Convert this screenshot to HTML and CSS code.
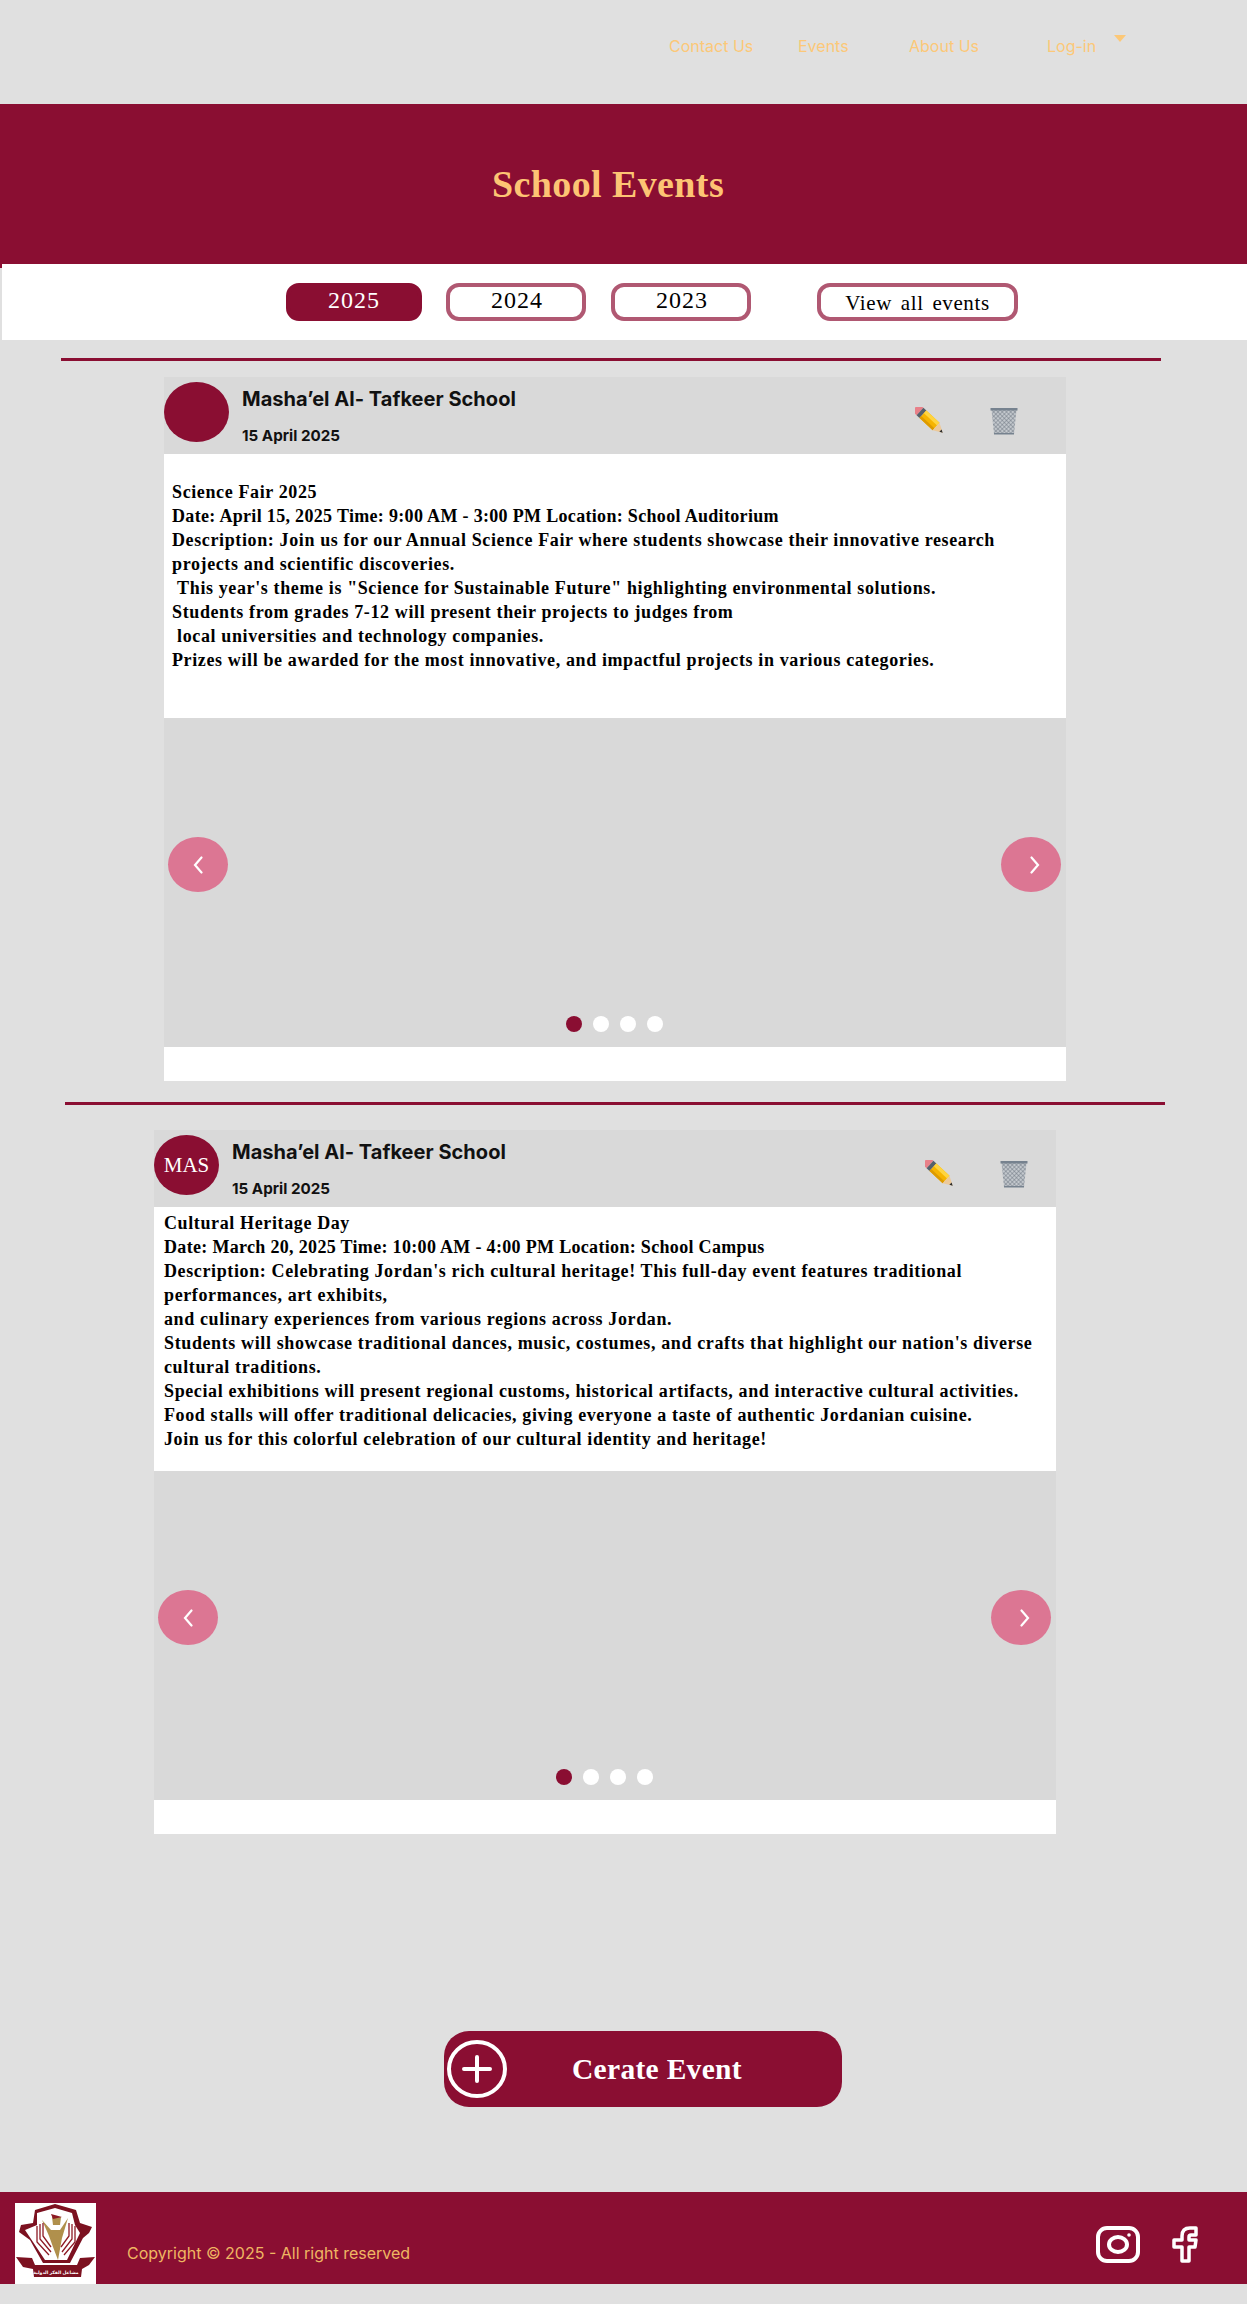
FILE: index.html
```html
<!DOCTYPE html>
<html lang="en">
<head>
<meta charset="utf-8">
<title>School Events</title>
<link rel="stylesheet" href="styles.css">
</head>
<body>
<svg class="defs" width="0" height="0" aria-hidden="true">
  <defs>
    <pattern id="mesh" width="3" height="3" patternUnits="userSpaceOnUse" patternTransform="rotate(45)">
      <rect width="3" height="3" fill="#c3c8cd"/>
      <path d="M0 0H3M0 0V3" stroke="#68717c" stroke-width=".9"/>
    </pattern>
    <symbol id="pencil" viewBox="0 0 30 28">
      <g transform="translate(5 4.500) rotate(43)">
        <path d="M-4 -5 H0 V5 H-4 C-7 5 -7 -5 -4 -5 Z" fill="#e88089"/>
        <rect x="0" y="-5" width="4" height="10" fill="#56606b"/>
        <rect x="4" y="-5" width="18" height="10" fill="#f6b400"/>
        <rect x="4" y="-5" width="18" height="3.500" fill="#ffd43f"/>
        <rect x="4" y="2.500" width="18" height="2.500" fill="#dd9a00"/>
        <path d="M22 -5 L31 0 L22 5 Z" fill="#ecc99a"/>
        <path d="M28 -1.600 L31 0 L28 1.600 Z" fill="#2e2e2e"/>
      </g>
    </symbol>
    <symbol id="trash" viewBox="0 0 29 28">
      <path d="M2 3 L27 3 L24.500 27 L4.500 27 Z" fill="url(#mesh)"/>
      <path d="M1 1 H28 V3.500 H1 Z" fill="#76828f"/>
      <path d="M4.500 26 H24.500 V27.500 H4.500 Z" fill="#76828f"/>
    </symbol>
  </defs>
</svg>

<header class="nav">
  <a class="nav-link">Contact Us</a>
  <a class="nav-link">Events</a>
  <a class="nav-link">About Us</a>
  <a class="nav-link nav-login">Log-in<span class="caret"></span></a>
</header>

<section class="hero"><h1>School Events</h1></section>

<nav class="years">
  <button class="year year-active">2025</button>
  <button class="year">2024</button>
  <button class="year">2023</button>
  <button class="year year-all">View all events</button>
</nav>

<div class="rule rule-one"></div>

<article class="event event-one">
  <div class="event-head">
    <div class="avatar"></div>
    <div class="who">
      <div class="school">Masha’el Al- Tafkeer School</div>
      <div class="date">15 April 2025</div>
    </div>
    <div class="tools">
      <svg class="tool"><use href="#pencil"/></svg>
      <svg class="tool"><use href="#trash"/></svg>
    </div>
  </div>
  <div class="event-body">
    <p>Science Fair 2025</p>
    <p class="when">Date: April 15, 2025 Time: 9:00 AM - 3:00 PM Location: School Auditorium</p>
    <p>Description: Join us for our Annual Science Fair where students showcase their innovative research<br>projects and scientific discoveries.</p>
    <p>&nbsp;This year's theme is "Science for Sustainable Future" highlighting environmental solutions.</p>
    <p>Students from grades 7-12 will present their projects to judges from</p>
    <p>&nbsp;local universities and technology companies.</p>
    <p>Prizes will be awarded for the most innovative, and impactful projects in various categories.</p>
  </div>
  <div class="carousel">
    <button class="arrow arrow-prev"><svg viewBox="0 0 12 18"><path d="M9.500 1.500 L3 9 L9.500 16.500"/></svg></button>
    <button class="arrow arrow-next"><svg viewBox="0 0 12 18"><path d="M2.500 1.500 L9 9 L2.500 16.500"/></svg></button>
    <div class="dots"><span class="dot dot-on"></span><span class="dot"></span><span class="dot"></span><span class="dot"></span></div>
  </div>
  <div class="event-foot"></div>
</article>

<div class="rule rule-two"></div>

<article class="event event-two">
  <div class="event-head">
    <div class="avatar">MAS</div>
    <div class="who">
      <div class="school">Masha’el Al- Tafkeer School</div>
      <div class="date">15 April 2025</div>
    </div>
    <div class="tools">
      <svg class="tool"><use href="#pencil"/></svg>
      <svg class="tool"><use href="#trash"/></svg>
    </div>
  </div>
  <div class="event-body">
    <p>Cultural Heritage Day</p>
    <p class="when">Date: March 20, 2025 Time: 10:00 AM - 4:00 PM Location: School Campus</p>
    <p>Description: Celebrating Jordan's rich cultural heritage! This full-day event features traditional<br>performances, art exhibits,</p>
    <p>and culinary experiences from various regions across Jordan.</p>
    <p>Students will showcase traditional dances, music, costumes, and crafts that highlight our nation's diverse<br>cultural traditions.</p>
    <p>Special exhibitions will present regional customs, historical artifacts, and interactive cultural activities.</p>
    <p>Food stalls will offer traditional delicacies, giving everyone a taste of authentic Jordanian cuisine.</p>
    <p>Join us for this colorful celebration of our cultural identity and heritage!</p>
  </div>
  <div class="carousel">
    <button class="arrow arrow-prev"><svg viewBox="0 0 12 18"><path d="M9.500 1.500 L3 9 L9.500 16.500"/></svg></button>
    <button class="arrow arrow-next"><svg viewBox="0 0 12 18"><path d="M2.500 1.500 L9 9 L2.500 16.500"/></svg></button>
    <div class="dots"><span class="dot dot-on"></span><span class="dot"></span><span class="dot"></span><span class="dot"></span></div>
  </div>
  <div class="event-foot"></div>
</article>

<button class="create">
  <svg class="create-plus" viewBox="0 0 60 58"><ellipse cx="30" cy="29" rx="28" ry="27"/><path d="M17 29 H43 M30 17 V41"/></svg>
  <span class="create-label">Cerate Event</span>
</button>

<footer class="footer">
  <div class="logo">
    <svg viewBox="0 0 81 81">
      <path d="M40 1 L61 7 L65 20 L77 24 L74 30 L68 35 L55 60 L28 60 L15 37 L4 29 L6 22 L18 20 L20 7 Z" fill="#7c1120"/>
      <path d="M40 5 L57 10 L60 22 L65 30 L52 57 L30 57 L10 27 L22 22 L22 10 Z" fill="#fff"/>
      <path d="M1 54 L17 55 L20 62 L62 62 L65 55 L80 54 L74 62 L67 66 L66 74 L19 74 L18 66 L8 64 Z" fill="#7c1120"/>
      <path d="M37 14 L46 14 L45 22 L38 22 Z" fill="#b0904c"/>
      <path d="M36 11 L47 14 L38 16 Z" fill="#8d1a24"/>
      <path d="M27 17 L36 27 L45 27 L53 15 L47 35 L43 57 L38 44 L34 33 Z" fill="#b0904c"/>
      <path d="M25 21 L25 36 L36 49 M28 20 L28 33 L36 44 M22 23 L22 39 L34 52" fill="none" stroke="#8d1a24" stroke-width="1.300"/>
      <path d="M57 21 L57 36 L47 49 M54 20 L54 33 L46 44 M60 23 L60 39 L49 52" fill="none" stroke="#8d1a24" stroke-width="1.300"/>
      <text class="logo-text" x="41" y="70.500" text-anchor="middle" direction="rtl">مشاعل الفكر الدولية</text>
    </svg>
  </div>
  <p class="copy">Copyright © 2025 - All right reserved</p>
  <div class="social">
    <svg class="ig" viewBox="0 0 44 37"><rect x="2" y="2" width="40" height="33" rx="9" ry="9"/><ellipse cx="22" cy="18.500" rx="9" ry="7.500"/><circle class="ig-dot" cx="33" cy="9" r="1.800"/></svg>
    <svg class="fb" viewBox="0 0 26 37"><path d="M24 2 H18 C12.500 2 10 5 10 10 V14 H2 V21 H10 V35 H17 V21 H23 L24 14 H17 V11 C17 9.500 18 9 19 9 H24 Z"/></svg>
  </div>
</footer>
</body>
</html>
```
FILE: styles.css
```css
* { box-sizing: border-box; }
html, body { margin: 0; padding: 0; }
body {
  background: #e0e0e0;
  font-family: "Inter", "Liberation Sans", sans-serif;
  width: 1247px;
  height: 2304px;
  overflow: hidden;
}
.defs { position: absolute; }

.nav {
  height: 104px;
  display: grid;
  grid-template-columns: 129px 111px 138px auto;
  justify-content: start;
  padding: 36px 0 0 669px;
}
.nav-link {
  color: #fcc878;
  font-size: 16px;
  line-height: 20px;
}
.nav-login { position: relative; }
.caret {
  position: absolute;
  left: 67px;
  top: -1px;
  border-left: 6px solid transparent;
  border-right: 6px solid transparent;
  border-top: 7px solid #fcc878;
}

.hero {
  height: 160px;
  background: #8a0e32;
  display: flex;
  align-items: center;
  justify-content: center;
  padding-right: 31px;
}
.hero h1 {
  margin: 0;
  font-family: "Liberation Serif", serif;
  font-weight: 700;
  font-size: 38px;
  letter-spacing: .4px;
  color: #fdc474;
}

.years {
  position: relative;
  margin-left: 2px;
  height: 76px;
  background: #fff;
  display: flex;
  align-items: flex-start;
  padding: 19px 0 0 284px;
}
.years::before {
  content: "";
  position: absolute;
  left: -2px;
  top: 0;
  width: 2px;
  height: 4px;
  background: #8a0e32;
}
.year {
  width: 140px;
  height: 38px;
  margin-right: 25px;
  padding: 0 0 4px 2px;
  background: #fff;
  color: #000;
  border: 4px solid #b05872;
  border-radius: 13px;
  font-family: "Liberation Serif", serif;
  font-size: 24px;
  letter-spacing: 1px;
}
.year-active {
  width: 136px;
  margin-right: 24px;
  padding-left: 0;
  background: #8a0e32;
  border-color: #8a0e32;
  color: #fff;
}
.year-all {
  width: 201px;
  margin: 0 0 0 41px;
  padding: 2px 0 0;
  font-size: 21px;
  letter-spacing: .6px;
  word-spacing: 3px;
}

.rule { height: 3px; background: #8a0e32; width: 1100px; }
.rule-one { margin: 18px 0 16px 61px; }
.rule-two { margin: 21px 0 25px 65px; }

.event { width: 902px; }
.event-one { margin-left: 164px; }
.event-two { margin-left: 154px; }

.event-head {
  height: 77px;
  background: #d9d9d9;
  display: flex;
  align-items: flex-start;
  padding-top: 5px;
}
.avatar {
  width: 65px;
  height: 60px;
  flex: none;
  border-radius: 50%;
  background: #8a0e32;
  color: #fff;
  display: flex;
  align-items: center;
  justify-content: center;
  font-family: "Liberation Serif", serif;
  font-size: 21px;
}
.who { margin-left: 13px; flex: 1; }
.school {
  font-weight: 700;
  font-size: 20px;
  line-height: 24px;
  margin-top: 5px;
  letter-spacing: .03px;
  color: #111;
}
.date {
  font-weight: 700;
  font-size: 15.200px;
  line-height: 18px;
  margin-top: 16px;
  color: #111;
}
.tools { display: flex; gap: 44px; margin-top: 25px; }
.event-one .tools { margin-right: 47px; }
.event-two .tools { margin-right: 27px; }
.tool { width: 30px; height: 28px; display: block; }

.event-body {
  height: 264px;
  background: #fff;
  font-family: "Liberation Serif", serif;
  font-weight: 700;
  font-size: 18px;
  line-height: 24px;
  letter-spacing: .62px;
  color: #000;
}
.event-body p { margin: 0; }
.event-body .when { letter-spacing: .32px; }
.event-one .event-body { padding: 26px 8px 0; }
.event-two .event-body { padding: 4px 10px 0; }

.carousel {
  position: relative;
  height: 329px;
  background: #d9d9d9;
}
.arrow {
  position: absolute;
  top: 119px;
  width: 60px;
  height: 55px;
  padding: 0;
  border: 0;
  border-radius: 50%;
  background: #dc7693;
  display: flex;
  align-items: center;
  justify-content: center;
}
.arrow svg { width: 12px; height: 18px; }
.arrow path { fill: none; stroke: #fff; stroke-width: 2.200; stroke-linecap: round; stroke-linejoin: miter; }
.arrow-prev { left: 4px; }
.arrow-next { right: 5px; }
.arrow-next svg { margin-left: 7px; }
.dots {
  position: absolute;
  left: 402px;
  top: 298px;
  display: flex;
  gap: 11px;
}
.dot { width: 16px; height: 16px; border-radius: 50%; background: #fff; }
.dot-on { background: #8a0e32; }
.event-foot { height: 34px; background: #fff; }

.create {
  position: absolute;
  left: 444px;
  top: 2031px;
  width: 398px;
  height: 76px;
  padding: 0 0 0 3px;
  border: 0;
  border-radius: 25px;
  background: #8a0e32;
  display: flex;
  align-items: center;
}
.create-plus { width: 60px; height: 58px; flex: none; }
.create-plus ellipse, .create-plus path { fill: none; stroke: #fff; stroke-width: 4; stroke-linecap: round; }
.create-label {
  margin-left: 65px;
  font-family: "Liberation Serif", serif;
  font-weight: 700;
  font-size: 29.500px;
  letter-spacing: .3px;
  color: #fff;
}

.footer {
  position: absolute;
  left: 0;
  top: 2192px;
  width: 1247px;
  height: 92px;
  background: #8a0e32;
  display: flex;
  align-items: flex-start;
  padding-left: 15px;
}
.logo { width: 81px; height: 81px; margin-top: 11px; background: #fff; flex: none; }
.logo svg { display: block; width: 81px; height: 81px; }
.logo-text { font-family: "Noto Sans", "DejaVu Sans", sans-serif; font-size: 4.500px; font-weight: 700; fill: #fff; }
.copy {
  margin: 51px 0 0 31px;
  font-size: 16px;
  line-height: 20px;
  color: #efb662;
  flex: 1;
}
.social { display: flex; gap: 32px; margin: 34px 49px 0 0; }
.ig { width: 44px; height: 37px; }
.ig rect, .ig ellipse { fill: none; stroke: #fff; stroke-width: 4; }
.ig-dot { fill: #fff; }
.fb { width: 26px; height: 37px; }
.fb path { fill: none; stroke: #fff; stroke-width: 3.500; stroke-linejoin: round; }
```
